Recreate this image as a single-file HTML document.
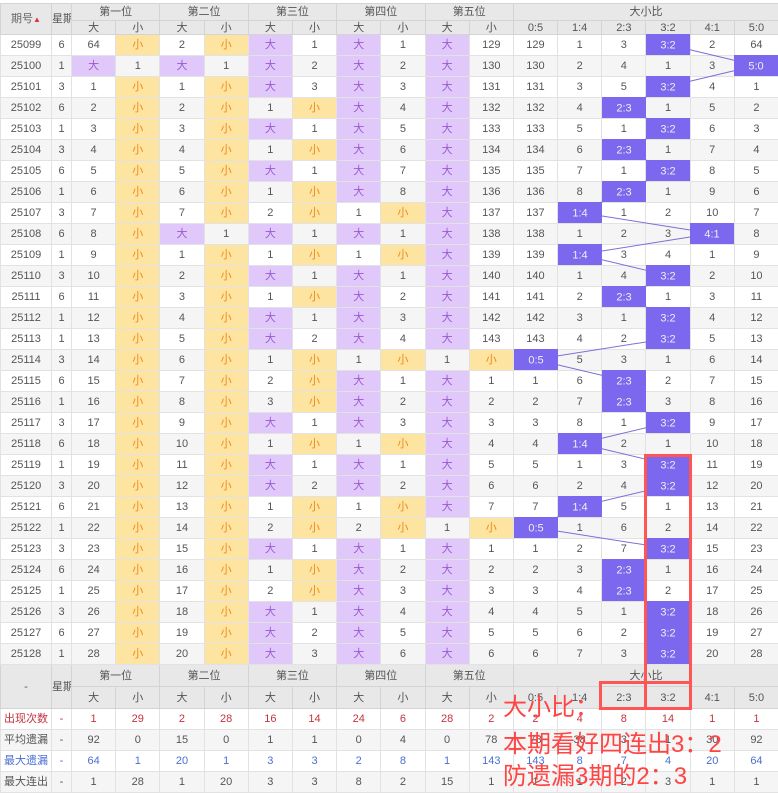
<!DOCTYPE html>
<html><head><meta charset="utf-8">
<style>
body{margin:0;width:778px;height:791px;overflow:hidden;background:#fff;font-family:"Liberation Sans","Noto Sans CJK SC",sans-serif;position:relative}
table{position:absolute;left:0;top:3px;border-collapse:collapse;table-layout:fixed;width:778px;font-size:11px;color:#555}
td,th{padding:0;text-align:center;border:1px solid #e2e2e2;overflow:hidden;white-space:nowrap;font-weight:normal;line-height:12px}
th{background:#e8e8e8;color:#555;border-color:#d4d4d4;font-size:11px}
tr.h1 th{height:16px}
tr.h2 th{height:13px}
tbody tr{height:21px}
tbody tr:nth-child(even) td{background:#f5f5f5}
td.d{background:#e0c8fb!important;color:#9b59d0}
td.x{background:#fde4a0!important;color:#f08a1a}
td.b{background:#7b68ee!important;color:#eee}
.g{border-left:1px solid #c4c4c4}
tr.s td{border-top:1px solid #c8c8c8}
tr.f1 th{height:21px}
tr.f2 th{height:21px}
tr.st td{height:20px}
tr.st:nth-child(even) td{background:#f5f5f5}
.red td{color:#c4333f}.blu td{color:#4a6fd0}
svg{position:absolute;left:0;top:0}
svg text{font-family:"Liberation Sans",sans-serif;font-size:11px;fill:#eee;text-anchor:middle}
.box{position:absolute;border:3px solid #f55;box-sizing:border-box}
.t{position:absolute;left:503px;color:#f44;font-size:24px;line-height:24px;white-space:nowrap;font-family:"Liberation Sans","Noto Sans CJK SC",sans-serif}
</style></head><body>
<table>
<colgroup><col style="width:51px"><col style="width:20px"><col span="16" style="width:44.19px"></colgroup>
<thead>
<tr class="h1"><th rowspan="2" style="color:#666">期号<span style="color:#d33;font-size:8px">▲</span></th><th rowspan="2">星期</th><th colspan="2" class="g">第一位</th><th colspan="2" class="g">第二位</th><th colspan="2" class="g">第三位</th><th colspan="2" class="g">第四位</th><th colspan="2" class="g">第五位</th><th colspan="6" class="g">大小比</th></tr>
<tr class="h2"><th class="g">大</th><th>小</th><th class="g">大</th><th>小</th><th class="g">大</th><th>小</th><th class="g">大</th><th>小</th><th class="g">大</th><th>小</th><th class="g">0:5</th><th>1:4</th><th>2:3</th><th>3:2</th><th>4:1</th><th>5:0</th></tr>
</thead>
<tbody>
<tr><td>25099</td><td>6</td><td class="g">64</td><td class="x">小</td><td class="g">2</td><td class="x">小</td><td class="d g">大</td><td>1</td><td class="d g">大</td><td>1</td><td class="d g">大</td><td>129</td><td class="g">129</td><td>1</td><td>3</td><td class="b">3:2</td><td>2</td><td>64</td></tr>
<tr><td>25100</td><td>1</td><td class="d g">大</td><td>1</td><td class="d g">大</td><td>1</td><td class="d g">大</td><td>2</td><td class="d g">大</td><td>2</td><td class="d g">大</td><td>130</td><td class="g">130</td><td>2</td><td>4</td><td>1</td><td>3</td><td class="b">5:0</td></tr>
<tr><td>25101</td><td>3</td><td class="g">1</td><td class="x">小</td><td class="g">1</td><td class="x">小</td><td class="d g">大</td><td>3</td><td class="d g">大</td><td>3</td><td class="d g">大</td><td>131</td><td class="g">131</td><td>3</td><td>5</td><td class="b">3:2</td><td>4</td><td>1</td></tr>
<tr><td>25102</td><td>6</td><td class="g">2</td><td class="x">小</td><td class="g">2</td><td class="x">小</td><td class="g">1</td><td class="x">小</td><td class="d g">大</td><td>4</td><td class="d g">大</td><td>132</td><td class="g">132</td><td>4</td><td class="b">2:3</td><td>1</td><td>5</td><td>2</td></tr>
<tr><td>25103</td><td>1</td><td class="g">3</td><td class="x">小</td><td class="g">3</td><td class="x">小</td><td class="d g">大</td><td>1</td><td class="d g">大</td><td>5</td><td class="d g">大</td><td>133</td><td class="g">133</td><td>5</td><td>1</td><td class="b">3:2</td><td>6</td><td>3</td></tr>
<tr class="s"><td>25104</td><td>3</td><td class="g">4</td><td class="x">小</td><td class="g">4</td><td class="x">小</td><td class="g">1</td><td class="x">小</td><td class="d g">大</td><td>6</td><td class="d g">大</td><td>134</td><td class="g">134</td><td>6</td><td class="b">2:3</td><td>1</td><td>7</td><td>4</td></tr>
<tr><td>25105</td><td>6</td><td class="g">5</td><td class="x">小</td><td class="g">5</td><td class="x">小</td><td class="d g">大</td><td>1</td><td class="d g">大</td><td>7</td><td class="d g">大</td><td>135</td><td class="g">135</td><td>7</td><td>1</td><td class="b">3:2</td><td>8</td><td>5</td></tr>
<tr><td>25106</td><td>1</td><td class="g">6</td><td class="x">小</td><td class="g">6</td><td class="x">小</td><td class="g">1</td><td class="x">小</td><td class="d g">大</td><td>8</td><td class="d g">大</td><td>136</td><td class="g">136</td><td>8</td><td class="b">2:3</td><td>1</td><td>9</td><td>6</td></tr>
<tr><td>25107</td><td>3</td><td class="g">7</td><td class="x">小</td><td class="g">7</td><td class="x">小</td><td class="g">2</td><td class="x">小</td><td class="g">1</td><td class="x">小</td><td class="d g">大</td><td>137</td><td class="g">137</td><td class="b">1:4</td><td>1</td><td>2</td><td>10</td><td>7</td></tr>
<tr><td>25108</td><td>6</td><td class="g">8</td><td class="x">小</td><td class="d g">大</td><td>1</td><td class="d g">大</td><td>1</td><td class="d g">大</td><td>1</td><td class="d g">大</td><td>138</td><td class="g">138</td><td>1</td><td>2</td><td>3</td><td class="b">4:1</td><td>8</td></tr>
<tr class="s"><td>25109</td><td>1</td><td class="g">9</td><td class="x">小</td><td class="g">1</td><td class="x">小</td><td class="g">1</td><td class="x">小</td><td class="g">1</td><td class="x">小</td><td class="d g">大</td><td>139</td><td class="g">139</td><td class="b">1:4</td><td>3</td><td>4</td><td>1</td><td>9</td></tr>
<tr><td>25110</td><td>3</td><td class="g">10</td><td class="x">小</td><td class="g">2</td><td class="x">小</td><td class="d g">大</td><td>1</td><td class="d g">大</td><td>1</td><td class="d g">大</td><td>140</td><td class="g">140</td><td>1</td><td>4</td><td class="b">3:2</td><td>2</td><td>10</td></tr>
<tr><td>25111</td><td>6</td><td class="g">11</td><td class="x">小</td><td class="g">3</td><td class="x">小</td><td class="g">1</td><td class="x">小</td><td class="d g">大</td><td>2</td><td class="d g">大</td><td>141</td><td class="g">141</td><td>2</td><td class="b">2:3</td><td>1</td><td>3</td><td>11</td></tr>
<tr><td>25112</td><td>1</td><td class="g">12</td><td class="x">小</td><td class="g">4</td><td class="x">小</td><td class="d g">大</td><td>1</td><td class="d g">大</td><td>3</td><td class="d g">大</td><td>142</td><td class="g">142</td><td>3</td><td>1</td><td class="b">3:2</td><td>4</td><td>12</td></tr>
<tr><td>25113</td><td>1</td><td class="g">13</td><td class="x">小</td><td class="g">5</td><td class="x">小</td><td class="d g">大</td><td>2</td><td class="d g">大</td><td>4</td><td class="d g">大</td><td>143</td><td class="g">143</td><td>4</td><td>2</td><td class="b">3:2</td><td>5</td><td>13</td></tr>
<tr class="s"><td>25114</td><td>3</td><td class="g">14</td><td class="x">小</td><td class="g">6</td><td class="x">小</td><td class="g">1</td><td class="x">小</td><td class="g">1</td><td class="x">小</td><td class="g">1</td><td class="x">小</td><td class="b g">0:5</td><td>5</td><td>3</td><td>1</td><td>6</td><td>14</td></tr>
<tr><td>25115</td><td>6</td><td class="g">15</td><td class="x">小</td><td class="g">7</td><td class="x">小</td><td class="g">2</td><td class="x">小</td><td class="d g">大</td><td>1</td><td class="d g">大</td><td>1</td><td class="g">1</td><td>6</td><td class="b">2:3</td><td>2</td><td>7</td><td>15</td></tr>
<tr><td>25116</td><td>1</td><td class="g">16</td><td class="x">小</td><td class="g">8</td><td class="x">小</td><td class="g">3</td><td class="x">小</td><td class="d g">大</td><td>2</td><td class="d g">大</td><td>2</td><td class="g">2</td><td>7</td><td class="b">2:3</td><td>3</td><td>8</td><td>16</td></tr>
<tr><td>25117</td><td>3</td><td class="g">17</td><td class="x">小</td><td class="g">9</td><td class="x">小</td><td class="d g">大</td><td>1</td><td class="d g">大</td><td>3</td><td class="d g">大</td><td>3</td><td class="g">3</td><td>8</td><td>1</td><td class="b">3:2</td><td>9</td><td>17</td></tr>
<tr><td>25118</td><td>6</td><td class="g">18</td><td class="x">小</td><td class="g">10</td><td class="x">小</td><td class="g">1</td><td class="x">小</td><td class="g">1</td><td class="x">小</td><td class="d g">大</td><td>4</td><td class="g">4</td><td class="b">1:4</td><td>2</td><td>1</td><td>10</td><td>18</td></tr>
<tr class="s"><td>25119</td><td>1</td><td class="g">19</td><td class="x">小</td><td class="g">11</td><td class="x">小</td><td class="d g">大</td><td>1</td><td class="d g">大</td><td>1</td><td class="d g">大</td><td>5</td><td class="g">5</td><td>1</td><td>3</td><td class="b">3:2</td><td>11</td><td>19</td></tr>
<tr><td>25120</td><td>3</td><td class="g">20</td><td class="x">小</td><td class="g">12</td><td class="x">小</td><td class="d g">大</td><td>2</td><td class="d g">大</td><td>2</td><td class="d g">大</td><td>6</td><td class="g">6</td><td>2</td><td>4</td><td class="b">3:2</td><td>12</td><td>20</td></tr>
<tr><td>25121</td><td>6</td><td class="g">21</td><td class="x">小</td><td class="g">13</td><td class="x">小</td><td class="g">1</td><td class="x">小</td><td class="g">1</td><td class="x">小</td><td class="d g">大</td><td>7</td><td class="g">7</td><td class="b">1:4</td><td>5</td><td>1</td><td>13</td><td>21</td></tr>
<tr><td>25122</td><td>1</td><td class="g">22</td><td class="x">小</td><td class="g">14</td><td class="x">小</td><td class="g">2</td><td class="x">小</td><td class="g">2</td><td class="x">小</td><td class="g">1</td><td class="x">小</td><td class="b g">0:5</td><td>1</td><td>6</td><td>2</td><td>14</td><td>22</td></tr>
<tr><td>25123</td><td>3</td><td class="g">23</td><td class="x">小</td><td class="g">15</td><td class="x">小</td><td class="d g">大</td><td>1</td><td class="d g">大</td><td>1</td><td class="d g">大</td><td>1</td><td class="g">1</td><td>2</td><td>7</td><td class="b">3:2</td><td>15</td><td>23</td></tr>
<tr class="s"><td>25124</td><td>6</td><td class="g">24</td><td class="x">小</td><td class="g">16</td><td class="x">小</td><td class="g">1</td><td class="x">小</td><td class="d g">大</td><td>2</td><td class="d g">大</td><td>2</td><td class="g">2</td><td>3</td><td class="b">2:3</td><td>1</td><td>16</td><td>24</td></tr>
<tr><td>25125</td><td>1</td><td class="g">25</td><td class="x">小</td><td class="g">17</td><td class="x">小</td><td class="g">2</td><td class="x">小</td><td class="d g">大</td><td>3</td><td class="d g">大</td><td>3</td><td class="g">3</td><td>4</td><td class="b">2:3</td><td>2</td><td>17</td><td>25</td></tr>
<tr><td>25126</td><td>3</td><td class="g">26</td><td class="x">小</td><td class="g">18</td><td class="x">小</td><td class="d g">大</td><td>1</td><td class="d g">大</td><td>4</td><td class="d g">大</td><td>4</td><td class="g">4</td><td>5</td><td>1</td><td class="b">3:2</td><td>18</td><td>26</td></tr>
<tr><td>25127</td><td>6</td><td class="g">27</td><td class="x">小</td><td class="g">19</td><td class="x">小</td><td class="d g">大</td><td>2</td><td class="d g">大</td><td>5</td><td class="d g">大</td><td>5</td><td class="g">5</td><td>6</td><td>2</td><td class="b">3:2</td><td>19</td><td>27</td></tr>
<tr><td>25128</td><td>1</td><td class="g">28</td><td class="x">小</td><td class="g">20</td><td class="x">小</td><td class="d g">大</td><td>3</td><td class="d g">大</td><td>6</td><td class="d g">大</td><td>6</td><td class="g">6</td><td>7</td><td>3</td><td class="b">3:2</td><td>20</td><td>28</td></tr>
</tbody>
<tbody>
<tr class="f1"><th rowspan="2">-</th><th rowspan="2">星期</th><th colspan="2" class="g">第一位</th><th colspan="2" class="g">第二位</th><th colspan="2" class="g">第三位</th><th colspan="2" class="g">第四位</th><th colspan="2" class="g">第五位</th><th colspan="6" class="g">大小比</th></tr>
<tr class="f2"><th class="g">大</th><th>小</th><th class="g">大</th><th>小</th><th class="g">大</th><th>小</th><th class="g">大</th><th>小</th><th class="g">大</th><th>小</th><th class="g">0:5</th><th>1:4</th><th>2:3</th><th>3:2</th><th>4:1</th><th>5:0</th></tr>
<tr class="st red"><td>出现次数</td><td>-</td><td class="g">1</td><td>29</td><td class="g">2</td><td>28</td><td class="g">16</td><td>14</td><td class="g">24</td><td>6</td><td class="g">28</td><td>2</td><td class="g">2</td><td>4</td><td>8</td><td>14</td><td>1</td><td>1</td></tr>
<tr class="st"><td>平均遗漏</td><td>-</td><td class="g">92</td><td>0</td><td class="g">15</td><td>0</td><td class="g">1</td><td>1</td><td class="g">0</td><td>4</td><td class="g">0</td><td>78</td><td class="g">78</td><td>38</td><td>3</td><td>1</td><td>30</td><td>92</td></tr>
<tr class="st blu"><td>最大遗漏</td><td>-</td><td class="g">64</td><td>1</td><td class="g">20</td><td>1</td><td class="g">3</td><td>3</td><td class="g">2</td><td>8</td><td class="g">1</td><td>143</td><td class="g">143</td><td>8</td><td>7</td><td>4</td><td>20</td><td>64</td></tr>
<tr class="st"><td>最大连出</td><td>-</td><td class="g">1</td><td>28</td><td class="g">1</td><td>20</td><td class="g">3</td><td>3</td><td class="g">8</td><td>2</td><td class="g">15</td><td>1</td><td class="g">1</td><td>1</td><td>2</td><td>3</td><td>1</td><td>1</td></tr>
</tbody>
</table>
<svg width="778" height="791">
<polyline fill="none" stroke="#7b70d8" stroke-width="1" points="668,44.5 756,65.5 668,86.5 624,107.5 668,128.5 624,149.5 668,170.5 624,191.5 580,212.5 712,233.5 580,254.5 668,275.5 624,296.5 668,317.5 668,338.5 535,359.5 624,380.5 624,401.5 668,422.5 580,443.5 668,464.5 668,485.5 580,506.5 535,527.5 668,548.5 624,569.5 624,590.5 668,611.5 668,632.5 668,653.5"/>
<g fill="#7b68ee">
<rect x="646" y="34" width="44" height="21"/><rect x="734" y="55" width="44" height="21"/><rect x="646" y="76" width="44" height="21"/><rect x="602" y="97" width="44" height="21"/><rect x="646" y="118" width="44" height="21"/><rect x="602" y="139" width="44" height="21"/><rect x="646" y="160" width="44" height="21"/><rect x="602" y="181" width="44" height="21"/><rect x="558" y="202" width="44" height="21"/><rect x="690" y="223" width="44" height="21"/><rect x="558" y="244" width="44" height="21"/><rect x="646" y="265" width="44" height="21"/><rect x="602" y="286" width="44" height="21"/><rect x="646" y="307" width="44" height="21"/><rect x="646" y="328" width="44" height="21"/><rect x="514" y="349" width="44" height="21"/><rect x="602" y="370" width="44" height="21"/><rect x="602" y="391" width="44" height="21"/><rect x="646" y="412" width="44" height="21"/><rect x="558" y="433" width="44" height="21"/><rect x="646" y="454" width="44" height="21"/><rect x="646" y="475" width="44" height="21"/><rect x="558" y="496" width="44" height="21"/><rect x="514" y="517" width="44" height="21"/><rect x="646" y="538" width="44" height="21"/><rect x="602" y="559" width="44" height="21"/><rect x="602" y="580" width="44" height="21"/><rect x="646" y="601" width="44" height="21"/><rect x="646" y="622" width="44" height="21"/><rect x="646" y="643" width="44" height="21"/>
</g>
<g>
<text x="668" y="48.5">3:2</text><text x="756" y="69.5">5:0</text><text x="668" y="90.5">3:2</text><text x="624" y="111.5">2:3</text><text x="668" y="132.5">3:2</text><text x="624" y="153.5">2:3</text><text x="668" y="174.5">3:2</text><text x="624" y="195.5">2:3</text><text x="580" y="216.5">1:4</text><text x="712" y="237.5">4:1</text><text x="580" y="258.5">1:4</text><text x="668" y="279.5">3:2</text><text x="624" y="300.5">2:3</text><text x="668" y="321.5">3:2</text><text x="668" y="342.5">3:2</text><text x="536" y="363.5">0:5</text><text x="624" y="384.5">2:3</text><text x="624" y="405.5">2:3</text><text x="668" y="426.5">3:2</text><text x="580" y="447.5">1:4</text><text x="668" y="468.5">3:2</text><text x="668" y="489.5">3:2</text><text x="580" y="510.5">1:4</text><text x="536" y="531.5">0:5</text><text x="668" y="552.5">3:2</text><text x="624" y="573.5">2:3</text><text x="624" y="594.5">2:3</text><text x="668" y="615.5">3:2</text><text x="668" y="636.5">3:2</text><text x="668" y="657.5">3:2</text>
</g>
</svg>
<div class="box" style="left:644px;top:454px;width:48px;height:256px"></div>
<div class="box" style="left:599px;top:681px;width:93px;height:29px"></div>
<div class="t" style="top:696px">大小比：</div>
<div class="t" style="top:733px">本期看好四连出3：2</div>
<div class="t" style="top:765px">防遗漏3期的2：3</div>
</body></html>
